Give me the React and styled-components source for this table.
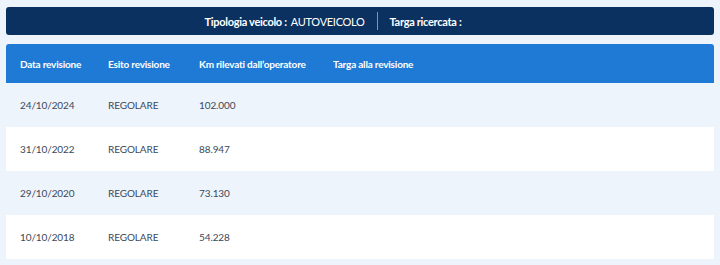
import React from 'react'
import styled, { createGlobalStyle } from 'styled-components'

const GlobalStyle = createGlobalStyle`
  html, body {
    margin: 0;
    padding: 0;
    background: #eef4fb;
    font-family: Lato, "Noto Sans", sans-serif;
  }
`

const Page = styled.div`
  padding: 7px 6px 6px 6px;
  display: flex;
  flex-direction: column;
  gap: 9px;
`

const InfoBar = styled.div`
  height: 28px;
  background: #0b3160;
  border-radius: 3px;
  display: flex;
  align-items: center;
  justify-content: center;
  padding-right: 50px;
  color: #fff;
  font-size: 11px;
  letter-spacing: -0.3px;
`

const InfoItem = styled.div`
  display: flex;
  align-items: center;
  gap: 4px;
  padding: 0 12px;
  height: 18px;
  border-left: ${p => (p.divider ? '1px solid #7f95b1' : 'none')};
`

const Label = styled.span`
  font-weight: 700;
`

const Value = styled.span`
  font-weight: 400;
`

const Table = styled.div`
  display: flex;
  flex-direction: column;
`

const Row = styled.div`
  display: grid;
  grid-template-columns: 88px 91px 134px 1fr;
  align-items: center;
  height: ${p => (p.head ? '39px' : '44px')};
  background: ${p => (p.head ? '#1f7ad6' : p.odd ? '#eef4fb' : '#ffffff')};
  border-radius: ${p => (p.head ? '3px 3px 0 0' : '0')};
  color: ${p => (p.head ? '#ffffff' : '#3c4858')};
  font-size: 10px;
  letter-spacing: ${p => (p.head ? '-0.2px' : '-0.1px')};
  font-weight: ${p => (p.head ? 700 : 400)};
`

const Cell = styled.div`
  padding-left: 14px;
  white-space: nowrap;
`

const revisioni = [
  { data: '24/10/2024', esito: 'REGOLARE', km: '102.000', targa: '' },
  { data: '31/10/2022', esito: 'REGOLARE', km: '88.947', targa: '' },
  { data: '29/10/2020', esito: 'REGOLARE', km: '73.130', targa: '' },
  { data: '10/10/2018', esito: 'REGOLARE', km: '54.228', targa: '' },
]

export default function App() {
  return (
    <>
      <GlobalStyle />
      <Page>
        <InfoBar>
          <InfoItem>
            <Label>Tipologia veicolo :</Label>
            <Value>AUTOVEICOLO</Value>
          </InfoItem>
          <InfoItem divider>
            <Label>Targa ricercata :</Label>
            <Value></Value>
          </InfoItem>
        </InfoBar>
        <Table>
          <Row head>
            <Cell>Data revisione</Cell>
            <Cell>Esito revisione</Cell>
            <Cell>Km rilevati dall’operatore</Cell>
            <Cell>Targa alla revisione</Cell>
          </Row>
          {revisioni.map((r, i) => (
            <Row key={r.data} odd={i % 2 === 0}>
              <Cell>{r.data}</Cell>
              <Cell>{r.esito}</Cell>
              <Cell>{r.km}</Cell>
              <Cell>{r.targa}</Cell>
            </Row>
          ))}
        </Table>
      </Page>
    </>
  )
}
